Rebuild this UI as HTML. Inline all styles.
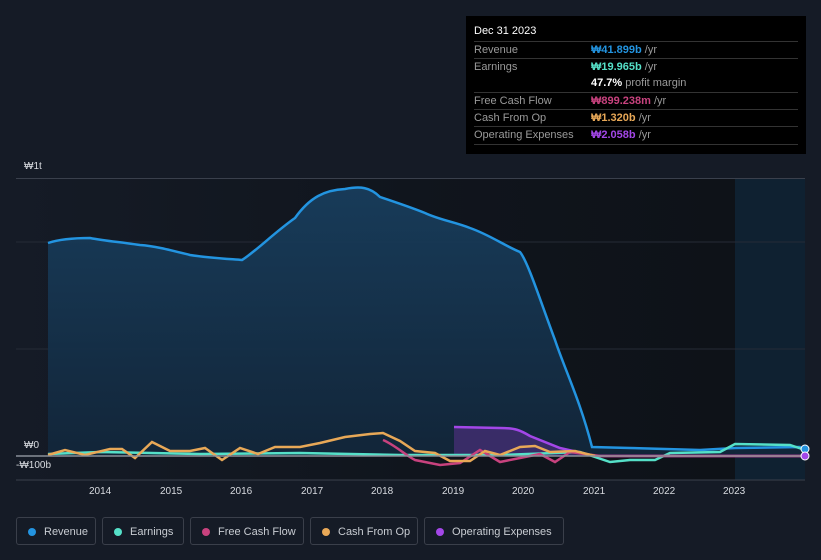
<!DOCTYPE html>
<html><head><meta charset="utf-8"><style>
body{margin:0;width:821px;height:560px;background:#151b26;font-family:"Liberation Sans","Noto Sans CJK KR",sans-serif;position:relative;overflow:hidden}
.tt{position:absolute;left:466px;top:16px;width:340px;height:138px;background:#000;color:#fff;font-size:11px}
.tt .h{position:absolute;left:8px;top:9px;font-size:11px}
.row{position:absolute;left:8px;width:324px;border-top:1px solid #333;height:17px;line-height:17px;color:#9a9a9a}
.row span{position:absolute;left:117px}
.leg{position:absolute;top:517px;height:28px;border:1px solid #3a3f4a;border-radius:3px;color:#c8ccd2;font-size:11px;line-height:28px;box-sizing:border-box;padding-left:27px}
.leg i{position:absolute;left:11px;top:10px;width:8px;height:8px;border-radius:50%}
.ax{position:absolute;color:#d8dbe0;font-size:10px}
</style></head><body>
<svg width="821" height="560" style="position:absolute;left:0;top:0">
<defs>
<linearGradient id="bg" x1="0" x2="1" y1="0" y2="0"><stop offset="0" stop-color="#151b26"/><stop offset="0.55" stop-color="#10151d"/><stop offset="1" stop-color="#0e1218"/></linearGradient>
<linearGradient id="rf" x1="0" x2="0" y1="0" y2="1"><stop offset="0" stop-color="#183d5c"/><stop offset="1" stop-color="#12263a"/></linearGradient>
</defs>
<rect x="16" y="178" width="719" height="302" fill="url(#bg)"/>
<rect x="735" y="178" width="70" height="302" fill="#0f2131"/>
<line x1="16" y1="178.5" x2="805" y2="178.5" stroke="#3a404c"/>
<line x1="16" y1="242" x2="805" y2="242" stroke="#252b36"/>
<line x1="16" y1="349" x2="805" y2="349" stroke="#252b36"/>
<line x1="16" y1="480" x2="805" y2="480" stroke="#3a404c"/>
<path d="M48,243 C60,239 75,238 90,238 C105,241 120,242 140,245 C155,246 170,250 190,255 C210,258 230,259 242,260 C255,252 275,232 295,218 C310,197 325,190 345,189 C360,186 370,187 380,197 C395,202 410,207 425,213 C440,220 455,222 470,228 C490,235 505,246 520,252 C528,262 540,300 555,340 C565,370 580,400 592,447 L630,448 L700,450 L735,448 L800,447 L805,450 L805,456 L48,456Z" fill="url(#rf)" fill-opacity="0.95"/>
<path d="M48,243 C60,239 75,238 90,238 C105,241 120,242 140,245 C155,246 170,250 190,255 C210,258 230,259 242,260 C255,252 275,232 295,218 C310,197 325,190 345,189 C360,186 370,187 380,197 C395,202 410,207 425,213 C440,220 455,222 470,228 C490,235 505,246 520,252 C528,262 540,300 555,340 C565,370 580,400 592,447 L630,448 L700,450 L735,448 L800,447 L805,450" fill="none" stroke="#2394e0" stroke-width="2.5"/>
<path d="M454,427 L500,428 C515,428 520,430 530,436 L560,448 L595,456 L454,456Z" fill="#4a2f7a" fill-opacity="0.7"/>
<path d="M454,427 L500,428 C515,428 520,430 530,436 L560,448 L595,456 L805,456" fill="none" stroke="#a347e8" stroke-width="2.5"/>
<path d="M48,454 L100,452 L200,454 L300,453 L400,455 L500,455 L580,452 L610,462 L630,460 L655,460 L670,453 L720,452 L735,444 L790,445 L805,450" fill="none" stroke="#55e0c8" stroke-width="2.5"/>
<path d="M383,440 C395,445 405,455 415,460 L440,465 L460,463 L480,450 L500,462 L520,458 L540,454 L555,462 L570,452 L600,456 L805,456" fill="none" stroke="#c8427e" stroke-width="2.5"/>
<path d="M48,455 L65,450 L85,455 L110,449 L122,449 L135,458 L152,442 L170,451 L190,451 L205,448 L222,460 L240,448 L258,454 L275,447 L300,447 L320,443 L345,437 L370,434 L383,433 L400,441 L415,451 L435,453 L450,461 L470,461 L485,451 L500,455 L520,447 L535,446 L550,452 L575,451 L595,456" fill="none" stroke="#e8a857" stroke-width="2.5"/>
<line x1="16" y1="456" x2="805" y2="456" stroke="#8a8f98" stroke-width="1.5"/>
<circle cx="805" cy="449" r="4" fill="#2394e0" stroke="#fff"/>
<circle cx="805" cy="456" r="4" fill="#a347e8" stroke="#fff"/>
</svg>
<div class="ax" style="left:24px;top:161px">₩1t</div>
<div class="ax" style="left:24px;top:440px">₩0</div>
<div class="ax" style="left:16px;top:460px">-₩100b</div>
<div class="ax" style="left:89px;top:486px">2014</div><div class="ax" style="left:160px;top:486px">2015</div><div class="ax" style="left:230px;top:486px">2016</div><div class="ax" style="left:301px;top:486px">2017</div><div class="ax" style="left:371px;top:486px">2018</div><div class="ax" style="left:442px;top:486px">2019</div><div class="ax" style="left:512px;top:486px">2020</div><div class="ax" style="left:583px;top:486px">2021</div><div class="ax" style="left:653px;top:486px">2022</div><div class="ax" style="left:723px;top:486px">2023</div>
<div class="tt"><div class="h">Dec 31 2023</div>
<div class="row" style="top:25px">Revenue<span><b style="color:#2394e0">₩41.899b</b> /yr</span></div>
<div class="row" style="top:42px">Earnings<span><b style="color:#55e0c8">₩19.965b</b> /yr</span></div>
<div class="row" style="top:59px;border-top:none"><span><b style="color:#fff">47.7%</b> profit margin</span></div>
<div class="row" style="top:76px">Free Cash Flow<span><b style="color:#c8427e">₩899.238m</b> /yr</span></div>
<div class="row" style="top:93px">Cash From Op<span><b style="color:#e8a857">₩1.320b</b> /yr</span></div>
<div class="row" style="top:110px;border-bottom:1px solid #333">Operating Expenses<span><b style="color:#a347e8">₩2.058b</b> /yr</span></div>
</div>
<div class="leg" style="left:16px;width:80px"><i style="background:#2394e0"></i>Revenue</div>
<div class="leg" style="left:102px;width:82px"><i style="background:#55e0c8"></i>Earnings</div>
<div class="leg" style="left:190px;width:114px"><i style="background:#c8427e"></i>Free Cash Flow</div>
<div class="leg" style="left:310px;width:108px"><i style="background:#e8a857"></i>Cash From Op</div>
<div class="leg" style="left:424px;width:140px"><i style="background:#a347e8"></i>Operating Expenses</div>
</body></html>
